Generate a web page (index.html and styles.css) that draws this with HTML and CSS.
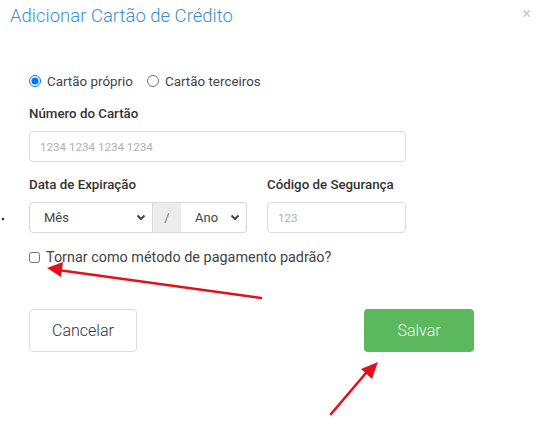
FILE: index.html
```html
<!DOCTYPE html>
<html lang="pt">
<head>
    <meta charset="UTF-8">
    <meta name="viewport" content="width=device-width, initial-scale=1.0">
    <title>Adicionar Cartão de Crédito</title>
    <link rel="stylesheet" href="styles.css">
</head>
<body>
    <div class="modal">
        <div class="modal-header">
            <h2 class="modal-title">Adicionar Cartão de Crédito</h2>
            <span class="close">&times;</span>
        </div>

        <form class="card-form">
            <div class="owner-choice">
                <label class="radio"><input type="radio" name="owner" checked> Cartão próprio</label>
                <label class="radio"><input type="radio" name="owner"> Cartão terceiros</label>
            </div>

            <label class="field-label" for="card-number">Número do Cartão</label>
            <input type="text" id="card-number" class="text-input" placeholder="1234 1234 1234 1234">

            <div class="expiry-row">
                <div>
                    <label class="field-label">Data de Expiração</label>
                    <div class="date-group">
                        <div class="select-wrap month">
                            <select class="date-select"><option>Mês</option></select>
                            <svg class="chevron" width="10" height="7" viewBox="0 0 10 7"><path d="M1.5 1.5 L5 5 L8.5 1.5" fill="none" stroke="#444" stroke-width="2"/></svg>
                        </div>
                        <span class="slash">/</span>
                        <div class="select-wrap year">
                            <select class="date-select"><option>Ano</option></select>
                            <svg class="chevron" width="10" height="7" viewBox="0 0 10 7"><path d="M1.5 1.5 L5 5 L8.5 1.5" fill="none" stroke="#444" stroke-width="2"/></svg>
                        </div>
                    </div>
                </div>
                <div>
                    <label class="field-label" for="cvv">Código de Segurança</label>
                    <input type="text" id="cvv" class="text-input" placeholder="123">
                </div>
            </div>

            <label class="checkbox"><input type="checkbox"> Tornar como método de pagamento padrão?</label>
        </form>

        <div class="modal-footer">
            <button class="btn btn-cancel">Cancelar</button>
            <button class="btn btn-save">Salvar</button>
        </div>
    </div>

    <!-- annotation arrows drawn over the screenshot -->
    <svg class="annotations" width="536" height="438" viewBox="0 0 536 438">
        <circle cx="3" cy="219" r="1.3" fill="#333"/>
        <line x1="261" y1="298" x2="58" y2="270" stroke="#e3101c" stroke-width="2.6" stroke-linecap="round"/>
        <polygon points="47,268 63,262 61,277" fill="#e3101c"/>
        <line x1="331" y1="414" x2="366" y2="373" stroke="#e3101c" stroke-width="2.6" stroke-linecap="round"/>
        <polygon points="378,362 372,379 361,369" fill="#e3101c"/>
    </svg>
</body>
</html>
```

FILE: styles.css
```css
body {
    margin: 0;
    background-color: #ffffff;
    font-family: Roboto, "Liberation Sans", sans-serif;
    color: #333;
}

.modal {
    width: 536px;
    height: 438px;
    box-sizing: border-box;
}

.modal-header {
    display: flex;
    justify-content: space-between;
    align-items: flex-start;
    padding: 2px 5px 0 10px;
}

.modal-title {
    margin: 0;
    font-size: 18.5px;
    line-height: 28px;
    font-weight: 300;
    color: #3b8fd3;
}

.close {
    font-size: 16px;
    line-height: 18px;
    color: #c8c8c8;
    margin-top: 3px;
}

.card-form {
    width: 377px;
    padding: 42px 0 0 29px;
}

.owner-choice {
    display: flex;
    gap: 14px;
    height: 18px;
    align-items: center;
}

.radio, .checkbox {
    display: flex;
    align-items: center;
    font-size: 13.4px;
    color: #444;
}

.radio input {
    width: 12px;
    height: 12px;
    margin: 0 6px 0 0;
}

.field-label {
    display: block;
    font-size: 13.3px;
    font-weight: 500;
    color: #333;
    line-height: 16px;
    margin: 16px 0 9px;
}

.text-input {
    display: block;
    width: 100%;
    height: 31px;
    box-sizing: border-box;
    padding: 0 10px;
    border: 1px solid #dcdcdc;
    border-radius: 4px;
    font-family: inherit;
    font-size: 11.6px;
    color: #333;
}

.text-input::placeholder {
    color: #b0b0b0;
}

.expiry-row {
    display: grid;
    grid-template-columns: 218px 139px;
    gap: 20px;
}

.expiry-row .field-label {
    margin-top: 15px;
}

.date-group {
    display: flex;
    height: 31px;
}

.select-wrap {
    position: relative;
}

.select-wrap.month {
    width: 124px;
}

.select-wrap.year {
    width: 66px;
}

.date-select {
    appearance: none;
    width: 100%;
    height: 31px;
    padding: 0 0 0 14px;
    border: 1px solid #d8d8d8;
    background-color: #ffffff;
    font-family: inherit;
    font-size: 13px;
    color: #444;
}

.month .date-select {
    border-radius: 4px 0 0 4px;
}

.year .date-select {
    border-left: none;
    border-radius: 0 4px 4px 0;
    padding-left: 14px;
}

.chevron {
    position: absolute;
    right: 7px;
    top: 12px;
}

.slash {
    width: 28px;
    display: flex;
    align-items: center;
    justify-content: center;
    background-color: #ececec;
    border-top: 1px solid #d8d8d8;
    border-bottom: 1px solid #d8d8d8;
    box-sizing: border-box;
    font-size: 13px;
    color: #777;
}

.checkbox {
    margin-top: 16px;
    font-size: 14.4px;
}

.checkbox input {
    width: 11px;
    height: 11px;
    margin: 0 6px 0 0;
}

.modal-footer {
    display: flex;
    justify-content: space-between;
    width: 445px;
    padding: 43px 0 0 29px;
}

.btn {
    height: 43px;
    border-radius: 4px;
    font-family: inherit;
    font-size: 16px;
    font-weight: 300;
    cursor: pointer;
}

.btn-cancel {
    width: 108px;
    background-color: #ffffff;
    border: 1px solid #dcdcdc;
    color: #333;
}

.btn-save {
    width: 110px;
    background-color: #5cb85c;
    border: none;
    color: #eef8ee;
}

.annotations {
    position: absolute;
    left: 0;
    top: 0;
    pointer-events: none;
}
```
